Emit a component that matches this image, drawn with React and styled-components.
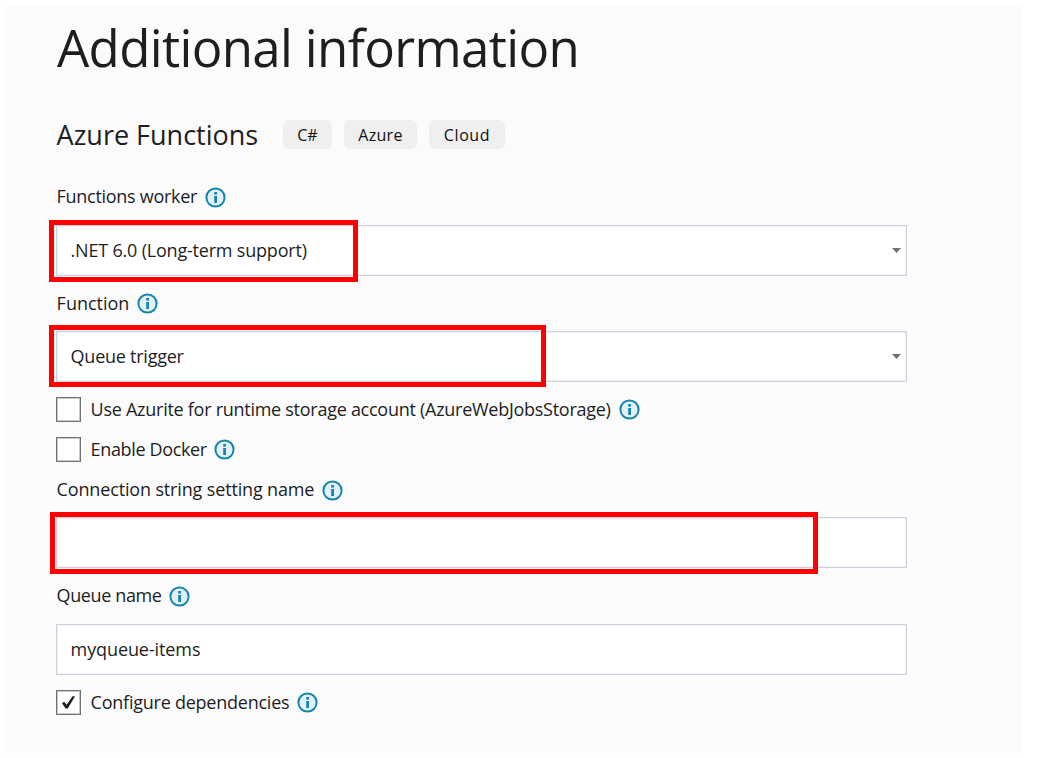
import React from "react";
import styled, { createGlobalStyle } from "styled-components";

const GlobalStyle = createGlobalStyle`
  * { box-sizing: border-box; }
  body { margin: 0; background: #fff; }
`;

const Page = styled.div`
  width: 1040px;
  height: 758px;
  padding: 6px 17px 5px 4px;
  background: #fff;
  overflow: hidden;
  font-family: "Open Sans", "Noto Sans", sans-serif;
  color: #1e1e1e;
`;

const Panel = styled.main`
  height: 747px;
  padding: 0 116px 0 52px;
  background: #fbfbfb;
`;

const Title = styled.h1`
  margin: 0;
  padding: 6px 0 0 1px;
  height: 99px;
  font-size: 51px;
  line-height: 70px;
  font-weight: 400;
  letter-spacing: -0.65px;
  white-space: nowrap;
`;

const Subheader = styled.div`
  display: flex;
  align-items: center;
  height: 58px;
`;

const Subtitle = styled.h2`
  margin: 0;
  width: 227px;
  padding: 2px 0 0 0.6px;
  font-size: 27px;
  line-height: 56px;
  font-weight: 400;
  white-space: nowrap;
`;

const Tags = styled.div`
  display: flex;
  gap: 12px;
  padding-top: 1px;
`;

const Tag = styled.span`
  width: ${(p) => p.$width}px;
  height: 29px;
  border-radius: 6px;
  background: #efefef;
  color: #111;
  font-size: 16px;
  font-weight: 500;
  line-height: 30px;
  text-align: center;
  letter-spacing: ${(p) => p.$spacing || 0}px;
`;

const LabelRow = styled.div`
  display: flex;
  align-items: center;
  gap: 8px;
  height: ${(p) => p.$height || 55}px;
  padding-top: ${(p) => p.$offset || 0}px;
  margin-bottom: ${(p) => p.$after || 0}px;
`;

const Text = styled.span`
  width: ${(p) => (p.$width ? `${p.$width}px` : "auto")};
  padding-left: 0.6px;
  font-size: 18px;
  line-height: 24px;
  padding-bottom: 2px;
  letter-spacing: ${(p) => p.$spacing || 0}px;
  white-space: nowrap;
`;

const Box = styled.div`
  position: relative;
  display: flex;
  align-items: center;
  justify-content: space-between;
  width: 851px;
  height: 51px;
  padding: 0 5px 0 13px;
  border: 1px solid #cfd1de;
  box-shadow: inset 0 0 0 1px #efeff5;
  background: #fff;
`;

const Highlight = styled.div`
  position: absolute;
  left: ${(p) => p.$left}px;
  top: ${(p) => p.$top}px;
  width: ${(p) => p.$width}px;
  height: 62px;
  border: 5px solid #f00;
`;

const Checks = styled.div`
  padding-top: 7px;
`;

const CheckRow = styled.label`
  display: flex;
  align-items: center;
  height: 40px;
`;

const CheckBox = styled.span`
  display: flex;
  align-items: center;
  justify-content: center;
  width: 25px;
  height: 25px;
  margin-right: 9px;
  border: 1px solid #717171;
  box-shadow: inset 0 0 0 1px #c8c8c8;
  background: #fff;
`;

const CheckLabel = styled.span`
  display: flex;
  align-items: center;
  gap: 8px;

  ${Text} {
    padding-bottom: 0;
  }
`;

const Svg = styled.svg`
  display: block;
  flex: none;
`;

const InfoIcon = () => (
  <Svg width="21" height="21" viewBox="0 0 21 21">
    <circle cx="10.5" cy="10.5" r="9.1" fill="#e3f1f6" stroke="#1586ae" strokeWidth="2" />
    <rect x="9.2" y="5" width="2.8" height="2.6" fill="#1586ae" />
    <rect x="9.2" y="9" width="2.8" height="7" fill="#1586ae" />
  </Svg>
);

const Caret = () => (
  <Svg width="9" height="5" viewBox="0 0 9 5">
    <path d="M0 0H9L4.5 5Z" fill="#717171" />
  </Svg>
);

const CheckMark = () => (
  <Svg width="15" height="15" viewBox="0 0 15 15">
    <path d="M1 8.2L3.2 6.8L5.6 9.8L11.6 1.2H14L6.8 13.4H4.6Z" fill="#1e1e1e" />
  </Svg>
);

const Label = ({ children, height, after, offset, width, spacing }) => (
  <LabelRow $height={height} $after={after} $offset={offset}>
    <Text $width={width} $spacing={spacing}>{children}</Text>
    <InfoIcon />
  </LabelRow>
);

const Check = ({ children, checked, width, spacing }) => (
  <CheckRow>
    <CheckBox>{checked && <CheckMark />}</CheckBox>
    <CheckLabel>
      <Text $width={width} $spacing={spacing}>{children}</Text>
      <InfoIcon />
    </CheckLabel>
  </CheckRow>
);

export default function App() {
  return (
    <Page>
      <GlobalStyle />
      <Panel>
        <Title>Additional information</Title>
        <Subheader>
          <Subtitle>Azure Functions</Subtitle>
          <Tags>
            <Tag $width={49}>C#</Tag>
            <Tag $width={73} $spacing={0.3}>Azure</Tag>
            <Tag $width={76} $spacing={0.6}>Cloud</Tag>
          </Tags>
        </Subheader>
        <Label height={62} offset={6} width={141} spacing={-0.29}>Functions worker</Label>
        <Box>
          <Text $spacing={-0.2}>.NET 6.0 (Long-term support)</Text>
          <Caret />
          <Highlight $left={-8} $top={-6} $width={309} />
        </Box>
        <Label width={73}>Function</Label>
        <Box>
          <Text $spacing={-0.25}>Queue trigger</Text>
          <Caret />
          <Highlight $left={-8} $top={-7} $width={497} />
        </Box>
        <Checks>
          <Check width={521} spacing={-0.27}>Use Azurite for runtime storage account (AzureWebJobsStorage)</Check>
          <Check width={116} spacing={-0.36}>Enable Docker</Check>
        </Checks>
        <Label height={42} after={6} width={258} spacing={-0.15}>Connection string setting name</Label>
        <Box>
          <Highlight $left={-7} $top={-6} $width={768} />
        </Box>
        <Label height={56} width={105} spacing={-0.38}>Queue name</Label>
        <Box>
          <Text $spacing={-0.1}>myqueue-items</Text>
        </Box>
        <Checks>
          <Check checked width={199} spacing={-0.24}>Configure dependencies</Check>
        </Checks>
      </Panel>
    </Page>
  );
}
